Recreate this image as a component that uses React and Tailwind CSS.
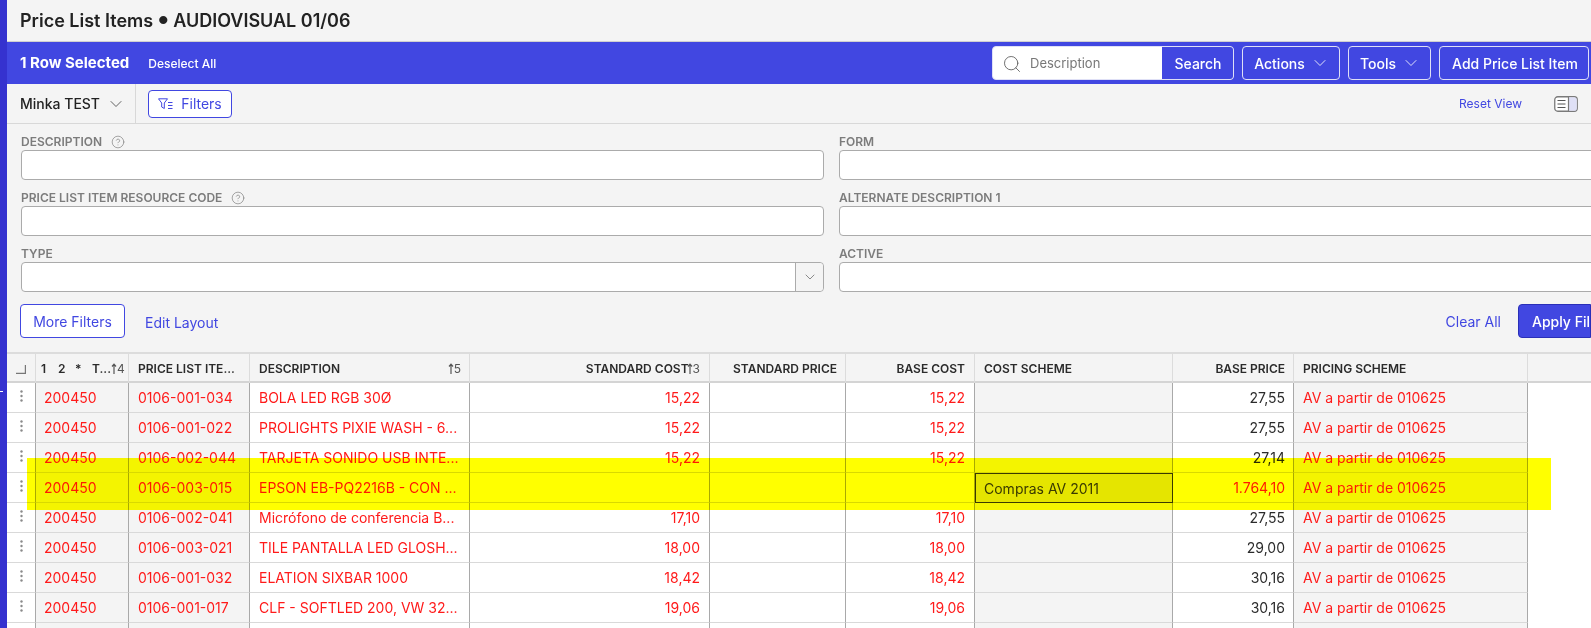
import { ChevronDown, CircleHelp, Search } from "lucide-react";

const GRID = "grid grid-cols-[29px_93px_121px_220px_240px_136px_129px_198px_121px_234px]";

const rows = [
  ["0106-001-034", "BOLA LED RGB 30Ø", "15,22", "15,22", "", "27,55"],
  ["0106-001-022", "PROLIGHTS PIXIE WASH - 6...", "15,22", "15,22", "", "27,55"],
  ["0106-002-044", "TARJETA SONIDO USB INTE...", "15,22", "15,22", "", "27,14"],
  ["0106-003-015", "EPSON EB-PQ2216B - CON ...", "", "", "Compras AV 2011", "1.764,10"],
  ["0106-002-041", "Micrófono de conferencia B...", "17,10", "17,10", "", "27,55"],
  ["0106-003-021", "TILE PANTALLA LED GLOSH...", "18,00", "18,00", "", "29,00"],
  ["0106-001-032", "ELATION SIXBAR 1000", "18,42", "18,42", "", "30,16"],
  ["0106-001-017", "CLF - SOFTLED 200, VW 32...", "19,06", "19,06", "", "30,16"],
];

const SortMark = ({ n, className = "" }) => (
  <span className={`flex shrink-0 items-center text-[12px] font-normal text-[#555] ${className}`}>
    <svg width="6" height="12" viewBox="0 0 6 12" fill="none" stroke="#555" strokeWidth="1.2">
      <path d="M3 11V1.5M1 3.5 3 1.2 5 3.5" />
    </svg>
    {n}
  </span>
);

const FilterIcon = () => (
  <svg width="15" height="12" viewBox="0 0 15 12" fill="none" stroke="#4147e1" strokeWidth="1">
    <path d="M.5.8h9L6.3 5v5.5L3.7 9V5z" />
    <path d="M10 4.5h4.5M10 7.5h4.5M10 10.5h4.5" />
  </svg>
);

const PanelIcon = () => (
  <svg width="24" height="16" viewBox="0 0 24 16" fill="none">
    <rect x=".75" y=".75" width="22.5" height="14.5" rx="3" fill="#fff" stroke="#7a7a7a" strokeWidth="1.3" />
    <path d="M14.5 1.2h5.7a2.6 2.6 0 0 1 2.6 2.6v8.4a2.6 2.6 0 0 1-2.6 2.6h-5.7z" fill="#dfe0f6" />
    <path d="M14.5 1v14" stroke="#7a7a7a" strokeWidth="1.2" />
    <path d="M3.5 4.5h8M3.5 8h8M3.5 11.5h8" stroke="#555" />
  </svg>
);

const Field = ({ label, help, select }) => (
  <div className="flex h-[56px] flex-col">
    <div className="flex h-[20px] items-center pt-[3px] text-[12px] font-semibold leading-none text-[#7c7c7c]">
      {label}
      {help && <CircleHelp size={14} strokeWidth={1.1} className="ml-[9px] text-[#777]" />}
    </div>
    <div className="flex h-[30px] rounded-[4px] border border-[#ababab] bg-white">
      <div className="flex-1" />
      {select && (
        <div className="flex w-[28px] items-center justify-center rounded-r-[4px] border-l border-[#ababab] bg-[#f4f4f4]">
          <ChevronDown size={16} strokeWidth={1} className="text-[#555]" />
        </div>
      )}
    </div>
  </div>
);

const BarButton = ({ children, width }) => (
  <button className={`flex h-[34px] items-center justify-center gap-[5px] rounded-[4px] border border-[#dfe0f6] bg-[#4147e1] pl-[2px] text-[14px] font-medium text-white ${width}`}>
    {children}
  </button>
);

const Head = ({ children, right, className = "" }) => (
  <div className={`flex h-[30px] items-center overflow-hidden whitespace-nowrap border-r border-[#dcdcdc] px-[9px] text-[12px] font-semibold text-[#2b2b2b] ${right ? "justify-end" : ""} ${className}`}>
    {children}
  </div>
);

const Cell = ({ children, right, grey, dark, className = "" }) => (
  <div className={`flex h-[30px] items-center whitespace-nowrap border-r border-b border-r-[#a9a9a9] border-b-[#d9d9d9] px-[9px] text-[14px] ${right ? "justify-end" : ""} ${grey ? "bg-[#f4f4f4]" : "bg-white"} ${dark ? "text-[#2b2b2b]" : "text-[#ff1a1a]"} ${className}`}>
    {children}
  </div>
);

const Row = ({ code, desc, std, base, scheme, price }) => (
  <div className={GRID}>
    <div className="flex h-[30px] items-center justify-center border-r border-b border-r-[#a9a9a9] border-b-[#d9d9d9] bg-white pb-[3px]">
      <svg width="3" height="12" viewBox="0 0 3 12" fill="#8a8a8a">
        <circle cx="1.5" cy="1.5" r="1.2" />
        <circle cx="1.5" cy="6" r="1.2" />
        <circle cx="1.5" cy="10.5" r="1.2" />
      </svg>
    </div>
    <Cell grey className="!pl-[8px]">{code && "200450"}</Cell>
    <Cell grey>{code}</Cell>
    <Cell>{desc}</Cell>
    <Cell right>{std}</Cell>
    <Cell />
    <Cell right>{base}</Cell>
    {scheme ? (
      <div className="flex h-[30px] items-center border border-[#3a3a20] bg-[#e5e5e5] px-[8px] text-[14px] text-[#3a3a20]">{scheme}</div>
    ) : (
      <Cell grey />
    )}
    <Cell right className="!pr-[8px]" dark={price && price !== "1.764,10"}>{price}</Cell>
    <Cell grey>{code && "AV a partir de 010625"}</Cell>
  </div>
);

export default function App() {
  return (
    <div className="relative flex h-[628px] w-[1591px] overflow-hidden bg-[#f4f4f4] font-['Inter',sans-serif]">
      <div className="relative w-[7px] shrink-0 bg-[#3532cf]">
        <div className="absolute left-0 top-[391px] h-px w-[3px] bg-white" />
      </div>

      <div className="flex min-w-0 flex-1 flex-col">
        <div className="flex h-[42px] shrink-0 items-center border-b border-[#d0d0d0] pl-[13px] text-[18px] font-semibold text-[#222]">
          Price List Items<span className="mx-[5px] text-[11px]">●</span>AUDIOVISUAL 01/06
        </div>

        <div className="flex h-[42px] shrink-0 items-center bg-[#4147e1] pl-[13px] pr-[2px] text-white">
          <span className="text-[15px] font-bold">1 Row Selected</span>
          <span className="ml-[19px] pt-[1px] text-[12px] font-medium">Deselect All</span>
          <div className="ml-auto flex h-[34px] w-[242px] overflow-hidden rounded-[4px] border border-[#dfe0f6] bg-white">
            <div className="flex flex-1 items-center pl-[9px] pt-[1px] text-[13px] text-[#777]">
              <Search size={20} strokeWidth={1} className="mr-[8px] text-[#555]" />
              Description
            </div>
            <div className="flex w-[71px] items-center justify-center bg-[#4147e1] pl-[1px] text-[14px] font-medium text-white">Search</div>
          </div>
          <div className="ml-[8px] flex gap-[8px]">
            <BarButton width="w-[98px]">Actions <ChevronDown size={20} strokeWidth={1} /></BarButton>
            <BarButton width="w-[83px]">Tools <ChevronDown size={20} strokeWidth={1} /></BarButton>
            <BarButton width="w-[150px]">Add Price List Item</BarButton>
          </div>
        </div>

        <div className="flex h-[40px] shrink-0 items-center border-b border-[#d8d8d8]">
          <div className="flex h-full w-[129px] items-center gap-[6px] border-r border-[#d8d8d8] pl-[13px] text-[14px] font-medium text-[#222]">
            Minka TEST <ChevronDown size={20} strokeWidth={1} className="text-[#444]" />
          </div>
          <button className="ml-[12px] flex h-[28px] w-[84px] items-center justify-center gap-[8px] rounded-[4px] border border-[#4147e1] bg-white text-[14px] text-[#4147e1]">
            <FilterIcon /> Filters
          </button>
          <span className="ml-auto text-[12px] text-[#4147e1]">Reset View</span>
          <div className="ml-[32px] mr-[13px]">
            <PanelIcon />
          </div>
        </div>

        <div className="h-[228px] shrink-0 overflow-hidden pl-[14px]">
          <div className="grid w-[1640px] grid-cols-[803px_803px] gap-x-[15px] pt-[6px]">
            <Field label="DESCRIPTION" help />
            <Field label="FORM" />
            <Field label="PRICE LIST ITEM RESOURCE CODE" help />
            <Field label="ALTERNATE DESCRIPTION 1" />
            <Field label="TYPE" select />
            <Field label="ACTIVE" />
          </div>
          <div className="-ml-px mt-[6px] flex items-center">
            <button className="h-[34px] w-[105px] rounded-[4px] border border-[#4147e1] bg-white text-[14px] text-[#4147e1]">More Filters</button>
            <span className="ml-[20px] mt-[2px] text-[14px] text-[#4147e1]">Edit Layout</span>
            <span className="ml-auto text-[14px] text-[#4147e1]">Clear All</span>
            <button className="ml-[17px] h-[34px] w-[73px] overflow-hidden whitespace-nowrap rounded-l-[4px] border border-[#2a2fb8] bg-[#4147e1] pl-[13px] text-left text-[14px] font-medium text-white">Apply Filters</button>
          </div>
        </div>

        <div className="flex h-[31px] shrink-0 border-y-2 border-[#dcdcdc] border-b-[#d4d4d4]">
          <div className={GRID}>
            <Head className="justify-center">
              <svg width="10" height="10" viewBox="0 0 10 10" fill="none" stroke="#777" strokeWidth="1.2"><path d="M0 9.4h9.4V1" /></svg>
            </Head>
            <Head className="justify-between !px-[5px]">
              <span className="flex font-semibold">
                <span className="w-[17px]">1</span>
                <span className="w-[17px]">2</span>
                <span className="w-[17px]">*</span>
                <span>T...</span>
              </span>
              <SortMark n="4" />
            </Head>
            <Head>PRICE LIST ITE...</Head>
            <Head className="justify-between !pr-[8px]">DESCRIPTION <SortMark n="5" /></Head>
            <Head right>STANDARD COST<SortMark n="3" className="-ml-[2px]" /></Head>
            <Head right className="!pr-[8px]">STANDARD PRICE</Head>
            <Head right>BASE COST</Head>
            <Head>COST SCHEME</Head>
            <Head right className="!pr-[8px]">BASE PRICE</Head>
            <Head>PRICING SCHEME</Head>
          </div>
        </div>

        <div className="flex-1 bg-white">
          {rows.map((r) => (
            <Row key={r[0]} code={r[0]} desc={r[1]} std={r[2]} base={r[3]} scheme={r[4]} price={r[5]} />
          ))}
          <Row />
        </div>
      </div>

      {/* highlighter mark over the row */}
      <div className="pointer-events-none absolute left-[27px] top-[458px] h-[52px] w-[1524px] bg-[#ffff00] mix-blend-multiply" />
    </div>
  );
}
